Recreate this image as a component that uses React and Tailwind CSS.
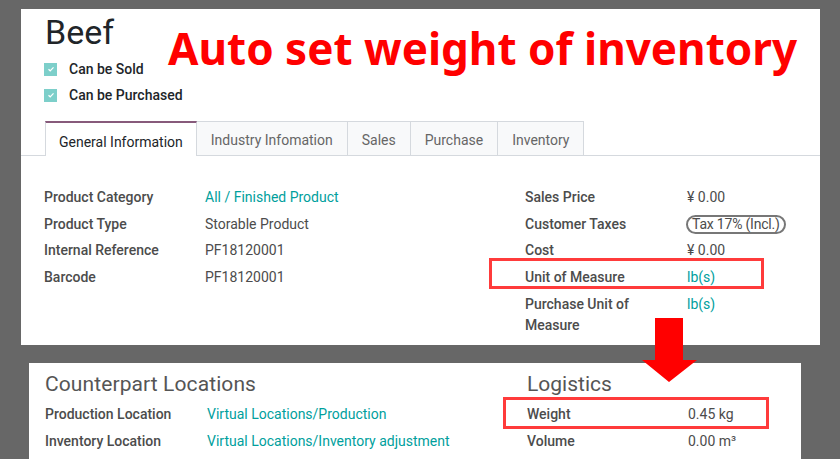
const Row = ({ label, children, labelW = "w-[161px]" }) => (
  <div className="flex items-start min-h-[26.7px]">
    <div className={`${labelW} shrink-0 pr-3 font-medium text-[#4c4c4c] leading-[21px]`}>{label}</div>
    <div className="text-[#4c4c4c] leading-[21px]">{children}</div>
  </div>
);

const Link = ({ children }) => <span className="text-[#00a09d]">{children}</span>;

const Check = () => (
  <span className="w-[13px] h-[13px] bg-[#7dcfca] flex items-center justify-center">
    <svg width="8" height="8" viewBox="0 0 8 8">
      <path d="M1.5 4.2 L3.2 5.8 L6.5 2.3" stroke="#fff" strokeWidth="1.2" fill="none" />
    </svg>
  </span>
);

const tabs = ["General Information", "Industry Infomation", "Sales", "Purchase", "Inventory"];

export default function App() {
  return (
    <div
      className="relative w-[840px] h-[459px] overflow-hidden bg-[#676767] text-[14px]"
      style={{ fontFamily: "Roboto, 'Liberation Sans', sans-serif" }}
    >
      {/* top panel */}
      <div className="ml-[21px] mt-[9px] w-[799px] h-[336px] bg-white pt-[3px]">
        <div className="pl-[24px] text-[34px] leading-[40px] text-[#212529]">Beef</div>
        <div className="pl-[23px] mt-[8px] flex flex-col gap-[8px]">
          <div className="flex items-center gap-[12px] h-[18px]">
            <Check />
            <span className="font-medium text-[#212529]">Can be Sold</span>
          </div>
          <div className="flex items-center gap-[12px] h-[18px]">
            <Check />
            <span className="font-medium text-[#212529]">Can be Purchased</span>
          </div>
        </div>
        {/* tabs */}
        <div className="mt-[17px] flex border-b border-[#d5d9de] pl-[24px] h-[35px]">
          {tabs.map((t, i) => (
            <div
              key={t}
              className={
                i === 0
                  ? "px-[13px] pt-[9px] border-t-2 border-t-[#875a7b] border-x border-x-[#d5d9de] bg-white text-[#212529] -mb-px"
                  : "px-[14px] pt-[8px] border-t border-r border-[#d5d9de] bg-[#f8f9fa] text-[#666]"
              }
            >
              {t}
            </div>
          ))}
        </div>
        {/* fields */}
        <div className="flex pl-[23px] pt-[31px]">
          <div className="w-[481px] flex flex-col">
            <Row label="Product Category"><Link>All / Finished Product</Link></Row>
            <Row label="Product Type">Storable Product</Row>
            <Row label="Internal Reference">PF18120001</Row>
            <Row label="Barcode">PF18120001</Row>
          </div>
          <div className="flex flex-col">
            <Row labelW="w-[162px]" label="Sales Price">¥ 0.00</Row>
            <Row labelW="w-[162px]" label="Customer Taxes">
              <span className="inline-block border-2 border-[#777] rounded-full px-[4px] leading-[15px] -ml-px tracking-[-0.2px]">
                Tax 17% (Incl.)
              </span>
            </Row>
            <Row labelW="w-[162px]" label="Cost">¥ 0.00</Row>
            <Row labelW="w-[162px]" label="Unit of Measure"><Link>lb(s)</Link></Row>
            <Row labelW="w-[162px]" label="Purchase Unit of Measure"><Link>lb(s)</Link></Row>
          </div>
        </div>
      </div>

      {/* bottom panel */}
      <div className="ml-[29px] mt-[18px] w-[772px] h-[120px] bg-white pl-[16px] pt-[8px]">
        <div className="flex">
          <div className="w-[482px] flex flex-col">
            <div className="text-[21px] leading-[26px] text-[#555] mb-[7px] tracking-[0.1px]">Counterpart Locations</div>
            <Row labelW="w-[162px]" label="Production Location"><Link>Virtual Locations/Production</Link></Row>
            <Row labelW="w-[162px]" label="Inventory Location"><Link>Virtual Locations/Inventory adjustment</Link></Row>
          </div>
          <div className="flex flex-col">
            <div className="text-[21px] leading-[26px] text-[#555] mb-[7px]">Logistics</div>
            <Row labelW="w-[161px]" label="Weight">0.45 kg</Row>
            <Row labelW="w-[161px]" label="Volume">0.00 m³</Row>
          </div>
        </div>
      </div>

      {/* annotations */}
      <div
        className="absolute left-[168px] top-[20px] text-[44px] leading-[56px] font-bold text-[#ff0000]"
        style={{ fontFamily: "'Noto Sans', sans-serif" }}
      >
        Auto set weight of inventory
      </div>
      <div className="absolute left-[489px] top-[258px] w-[275px] h-[31px] border-[3px] border-[#ff3b3b]" />
      <div className="absolute left-[503px] top-[397px] w-[266px] h-[32px] border-[3px] border-[#ff3b3b]" />
      <svg className="absolute left-[640px] top-[317px]" width="60" height="68" viewBox="0 0 60 68">
        <path d="M15 1 L43 1 L43 43 L57 43 L29 65 L2 43 L15 43 Z" fill="#ff0000" />
      </svg>
    </div>
  );
}
